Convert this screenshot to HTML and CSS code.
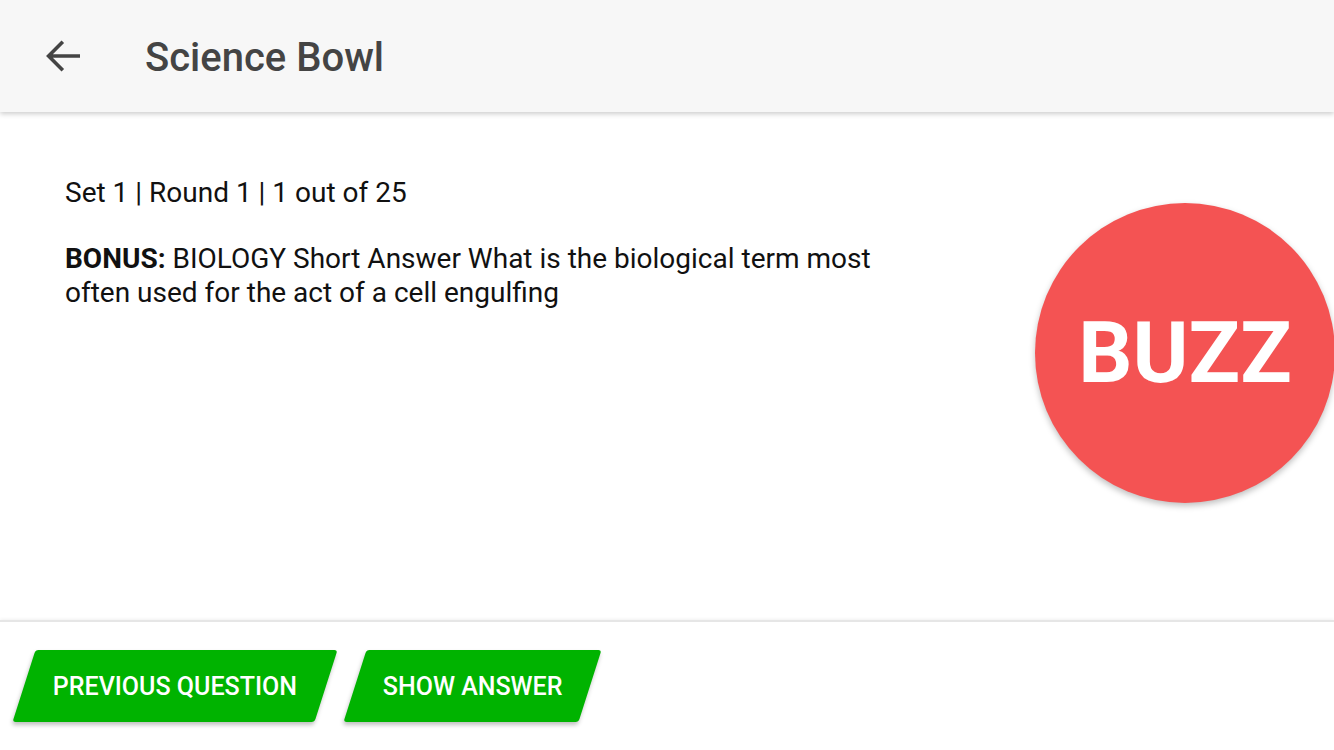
FILE: index.html
```html
<!DOCTYPE html>
<html>
<head>
<meta charset="utf-8">
<link rel="stylesheet" href="styles.css">
</head>
<body>
<div class="app">
  <header class="topbar">
    <button class="back" aria-label="Back">
      <svg width="48" height="48" viewBox="0 0 24 24"><path d="M20 12H4.8M11.4 4.9 4.3 12l7.1 7.1" fill="none" stroke="#444" stroke-width="1.8"/></svg>
    </button>
    <h1 class="title">Science Bowl</h1>
  </header>
  <main class="main">
    <section class="question">
      <p class="meta">Set 1 | Round 1 | 1 out of 25</p>
      <p class="qtext"><strong>BONUS:</strong> BIOLOGY Short Answer What is the biological term most often used for the act of a cell engulfing</p>
    </section>
    <button class="buzz">BUZZ</button>
  </main>
  <footer class="footer">
    <button class="action prev"><span>PREVIOUS QUESTION</span></button>
    <button class="action show"><span>SHOW ANSWER</span></button>
  </footer>
</div>
</body>
</html>
```
FILE: styles.css
```css
html, body {
  margin: 0;
  padding: 0;
  background: #fff;
  font-family: Roboto, "Liberation Sans", sans-serif;
}
.app {
  width: 1334px;
  height: 750px;
  display: flex;
  flex-direction: column;
  overflow: hidden;
}
.topbar {
  height: 112px;
  flex: none;
  background: #f7f7f7;
  display: flex;
  align-items: center;
  box-shadow: 0 2px 5px rgba(0,0,0,0.2);
  position: relative;
  z-index: 2;
}
.back {
  border: 0;
  background: none;
  padding: 0;
  margin: 0 0 0 40px;
  width: 48px;
  height: 48px;
  display: flex;
}
.title {
  margin: 2px 0 0 57px;
  font-size: 40px;
  font-weight: 500;
  color: #444;
}
.main {
  flex: 1;
  display: flex;
  justify-content: space-between;
  align-items: flex-start;
}
.question {
  padding: 64px 0 0 65px;
  width: 830px;
}
.meta {
  margin: 0;
  font-size: 28px;
  line-height: 34px;
  color: #111;
}
.qtext {
  margin: 32px 0 0;
  font-size: 28px;
  line-height: 34px;
  color: #111;
}
.qtext strong {
  font-weight: 700;
}
.buzz {
  flex: none;
  width: 300px;
  height: 300px;
  border-radius: 50%;
  border: 0;
  margin: 91px -1px 0 0;
  background: #f45353;
  color: #fff;
  font-family: Roboto, "Liberation Sans", sans-serif;
  font-weight: 700;
  font-size: 85px;
  padding: 0;
  box-shadow: 0 3px 6px rgba(0,0,0,0.25);
}
.footer {
  flex: none;
  height: 130px;
  border-top: 2px solid #e6e6e6;
  box-shadow: 0 -1px 3px rgba(0,0,0,0.06);
  display: flex;
  align-items: flex-start;
  padding: 28px 0 0 24px;
  box-sizing: border-box;
}
.action {
  height: 72px;
  border: 0;
  background: #00b300;
  color: #fff;
  transform: skewX(-17.7deg);
  border-radius: 3px;
  box-shadow: 0 3px 4px rgba(0,0,0,0.25);
  font-family: Roboto, "Liberation Sans", sans-serif;
  font-weight: 500;
  font-size: 25px;
  padding: 0;
  display: flex;
  align-items: center;
  justify-content: center;
}
.action span {
  transform: skewX(17.7deg);
}
.prev { width: 302px; }
.show { width: 235px; margin-left: 29px; }
```
